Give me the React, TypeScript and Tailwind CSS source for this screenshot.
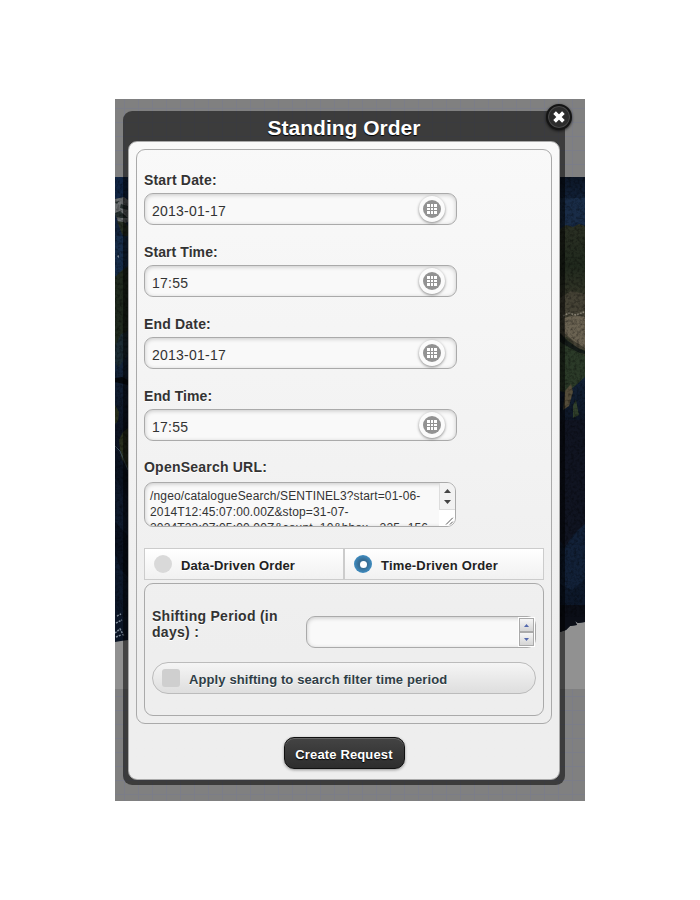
import React from "react";

const sans = "font-['Liberation_Sans',Arial,sans-serif]";

function MapBackdrop() {
  return (
    <svg className="absolute inset-0" width="470" height="702" viewBox="115 99 470 702">
      <defs>
        <pattern id="grid" x="124" y="108" width="14" height="14" patternUnits="userSpaceOnUse">
          <path d="M0 0H14V1H1V14H0Z" fill="#7b7d88" shapeRendering="crispEdges" />
        </pattern>
        <linearGradient id="sea" x1="0" y1="0" x2="0" y2="1">
          <stop offset="0" stopColor="#0c1626" />
          <stop offset=".06" stopColor="#13233c" />
          <stop offset=".4" stopColor="#14253c" />
          <stop offset=".55" stopColor="#0d1422" />
          <stop offset=".8" stopColor="#101d31" />
          <stop offset="1" stopColor="#0a1323" />
        </linearGradient>
        <linearGradient id="land" x1="0" y1="0" x2="0" y2="1">
          <stop offset="0" stopColor="#2b3024" />
          <stop offset=".25" stopColor="#20291d" />
          <stop offset=".5" stopColor="#3b3a2c" />
          <stop offset="1" stopColor="#27331f" />
        </linearGradient>
        <filter id="grain" x="0" y="0" width="1" height="1">
          <feTurbulence type="fractalNoise" baseFrequency=".35" numOctaves="3" seed="4" />
          <feColorMatrix values="0 0 0 0 0  0 0 0 0 0  0 0 0 0 0  2.2 0 0 0 -.9" />
        </filter>
      </defs>
      <rect x="115" y="99" width="470" height="702" fill="#808080" />
      <rect x="115" y="177" width="470" height="512" fill="#919191" />
      <rect x="115" y="99" width="470" height="78" fill="url(#grid)" />
      <rect x="115" y="689" width="470" height="112" fill="url(#grid)" />
      <path d="M115 177H585V622L578 623L575 621L577 625L570 626L566 630L560 632L128 640L121 641L115 642Z" fill="url(#sea)" />
      <path d="M115 177H128V198H115Z" fill="#112544" />
      <path d="M115 199L124 197L128 200V222L123 224L128 232L121 230L115 213Z" fill="#6d7173" />
      <path d="M115 202L119 201L117 204ZM121 204L128 206V210L120 208ZM115 213L120 211L128 218L121 218L116 217Z" fill="#252f2e" />
      <path d="M117 221L124 222L128 226V240L122 234Z" fill="#293125" />
      <path d="M115 236H128V275L121 272L115 280Z" fill="#172d4a" />
      <path d="M117 256L119 255L119 258Z" fill="#8492a0" />
      <path d="M115 277L120 272L128 266V330L121 339L115 346Z" fill="#1f291e" />
      <path d="M115 346L121 334L128 332V354L119 367L115 363Z" fill="#1c2c34" />
      <path d="M115 378L122 377L128 380V385L115 382Z" fill="#05090e" />
      <path d="M115 405L119 412L118 421L115 424ZM119 440L123 432L128 428V469L121 458Z" fill="#29301e" />
      <path d="M115 446L120 451L128 470" stroke="#3c4f5c" strokeWidth="1" fill="none" />
      <path d="M115 454L128 474V497L115 478Z" fill="#0b1320" />
      <path d="M115 522L128 536V577L121 570L115 553Z" fill="#0a111f" />
      <path d="M117 616L121 614M116 623L122 620M115 633L120 629L124 636M116 637L121 635" stroke="#7e8a98" strokeWidth="1.5" strokeDasharray="2 1" fill="none" />
      <path d="M560 198H585V225L576 222L568 228L560 225Z" fill="#192c47" />
      <path d="M560 229L566 225L573 227L579 224L585 226V366L576 382L567 393L560 391Z" fill="url(#land)" />
      <path d="M560 298L571 291L585 294V350L576 348L567 337L560 337Z" fill="#454235" />
      <path d="M564 318L575 315L585 317V348L574 341L564 333Z" fill="#6b6352" />
      <path d="M563 316L569 313L576 315L584 312" stroke="#8a8576" strokeWidth="1.5" strokeDasharray="2 1" fill="none" />
      <path d="M560 333L568 341L578 348L585 351V354L575 352L560 342Z" fill="#151c19" />
      <path d="M560 342L572 349L585 356V377L575 386L566 393L560 389Z" fill="#2b3a28" />
      <path d="M565 391L571 384L573 392L569 406L563 410Z" fill="#554d3a" />
      <path d="M573 405L576 400L579 415L573 418Z" fill="#31402c" />
      <path d="M560 420H585V526L573 535L565 547L560 541Z" fill="#101421" />
      <path d="M565 550L576 532L585 524V579L572 590L560 584Z" fill="#122138" />
      <path d="M560 605H585V622L578 623L575 621L577 625L570 626L566 630L560 632Z" fill="#0b0e17" />
      <rect x="115" y="177" width="470" height="440" filter="url(#grain)" opacity=".4" />
    </svg>
  );
}

function GridIcon() {
  return (
    <span className="mr-[11px] flex h-[26px] w-[26px] items-center justify-center rounded-full bg-[#fbfbfb] shadow-[0_1px_3px_rgba(0,0,0,.45)]">
      <svg width="18" height="18" viewBox="0 0 18 18">
        <circle cx="9" cy="9" r="9" fill="#929292" />
        <path
          d="M4 4h3v3H4zM8 4h2v3H8zM11 4h3v3h-3zM4 8h3v2H4zM8 8h2v2H8zM11 8h3v2h-3zM4 11h3v3H4zM8 11h2v3H8zM11 11h3v3h-3z"
          fill="#fff"
        />
      </svg>
    </span>
  );
}

function Field({ label, value, tight }: { label: string; value: string; tight?: boolean }) {
  return (
    <div className="h-[72px]">
      <div className={`h-[21px] text-[14px] font-bold leading-[16px] ${tight ? "tracking-[0.08px]" : "tracking-[0.18px]"}`}>{label}</div>
      <div className="flex h-[32px] w-[313px] items-center justify-between rounded-[9px] border border-[#aaa] bg-[#f9f9f9] pl-[7px] shadow-[inset_0_1px_4px_rgba(0,0,0,.2)]">
        <span className="pt-[3px] text-[14px] leading-[18px] tracking-[0.24px] [text-shadow:none]">{value}</span>
        <GridIcon />
      </div>
    </div>
  );
}

function SpinButton({ up }: { up?: boolean }) {
  return (
    <span className="flex h-[14px] w-[15px] items-center justify-center border border-[#aaa] bg-gradient-to-b from-[#f6f6f6] to-[#d5d5d5]">
      <svg width="5" height="3" viewBox="0 0 5 3">
        <path d={up ? "M0 3L2.5 0L5 3Z" : "M0 0H5L2.5 3Z"} fill="#5468ad" />
      </svg>
    </span>
  );
}

export default function App() {
  return (
    <main className={`flex h-[900px] w-[700px] items-center justify-center bg-white text-[#333] ${sans}`}>
      <div className="relative h-[702px] w-[470px]">
        <MapBackdrop />
        <section className="relative ml-[8px] mt-[12px] flex h-[674px] w-[442px] flex-col rounded-[9px] bg-black/53 px-[5px] pb-[5px]">
          <h1 className="h-[30px] pt-[5px] text-center text-[21px] font-bold leading-[24px] text-white [text-shadow:0_1px_1px_#000]">
            Standing Order
          </h1>
          <button aria-label="Close" className="absolute -top-[7px] left-[423px] flex h-[26px] w-[26px] items-center justify-center rounded-full border-2 border-[#141414] bg-[#2c2c2c] shadow-[0_1px_3px_rgba(0,0,0,.7),inset_0_0_0_1px_#484848]">
            <svg className="shrink-0" width="14" height="14" viewBox="0 0 14 14">
              <path d="M2.6 2.6L11.4 11.4M11.4 2.6L2.6 11.4" stroke="#fff" strokeWidth="3.7" />
            </svg>
          </button>
          <div className="flex h-[639px] w-[432px] flex-col items-center rounded-[9px] border border-[#aaa] bg-gradient-to-b from-[#f9f9f9] to-[#eee] to-[80%] pt-[7px] [text-shadow:0_1px_0_#fff]">
            <div className="h-[575px] w-[416px] shrink-0 rounded-[9px] border border-[#aaa] px-[7px] pt-[22px]">
              <Field label="Start Date:" value="2013-01-17" />
              <Field label="Start Time:" value="17:55" tight />
              <Field label="End Date:" value="2013-01-17" />
              <Field label="End Time:" value="17:55" tight />
              <div className="-mt-px h-[23px] text-[14px] font-bold leading-[16px] tracking-[0.22px]">OpenSearch URL:</div>
              <div className="flex h-[45px] w-[312px] overflow-hidden rounded-[9px] border border-[#aaa] bg-[#f9f9f9] shadow-[inset_0_1px_4px_rgba(0,0,0,.2)]">
                <p className="w-[294px] overflow-hidden whitespace-pre pl-[5px] pt-[5px] text-[12px] leading-[16px] tracking-[0.15px] [text-shadow:none]">
                  {"/ngeo/catalogueSearch/SENTINEL3?start=01-06-\n2014T12:45:07:00.00Z&stop=31-07-\n2024T23:07:05:00.00Z&count=10&bbox=-225,-156"}
                </p>
                <div className="flex w-[16px] flex-col">
                  <div className="flex h-[27px] flex-col items-center justify-between border-b border-l border-[#ddd] bg-[#f2f2f2] pb-[5px] pt-[6px]">
                    <svg width="7" height="4" viewBox="0 0 7 4"><path d="M0 4L3.5 0L7 4Z" fill="#444" /></svg>
                    <svg width="7" height="4" viewBox="0 0 7 4"><path d="M0 0H7L3.5 4Z" fill="#444" /></svg>
                  </div>
                  <svg className="bg-white" width="16" height="17" viewBox="0 0 16 17">
                    <path d="M7 15L14 8M11 15L14 12" stroke="#555" fill="none" />
                  </svg>
                </div>
              </div>
              <div className="mt-[21px] flex h-[32px] border border-[#ccc] bg-gradient-to-b from-white to-[#f1f1f1] text-[13px] font-bold text-[#222]">
                <label className="flex w-[200px] items-center border-r-2 border-[#ccc] pl-[9px]">
                  <span className="h-[18px] w-[18px] rounded-full bg-[#d9d9d9]" />
                  <span className="ml-[9px] pt-[3px] tracking-[0.12px]">Data-Driven Order</span>
                </label>
                <label className="flex items-center pl-[9px]">
                  <span className="flex h-[18px] w-[18px] items-center justify-center rounded-full bg-[radial-gradient(circle,#386d94_35%,#3f8cc0_70%)]">
                    <span className="h-[7px] w-[7px] rounded-full bg-white" />
                  </span>
                  <span className="ml-[9px] pt-[3px] tracking-[0.18px]">Time-Driven Order</span>
                </label>
              </div>
              <div className="mt-[3px] h-[133px] rounded-[9px] border border-[#aaa] px-[7px] pt-[24px]">
                <div className="flex h-[54px] justify-between">
                  <div className="whitespace-nowrap text-[14px] font-bold leading-[16px] tracking-[0.28px]">Shifting Period (in<br />days) :</div>
                  <div className="mt-[8px] flex h-[32px] w-[230px] items-start justify-end rounded-[9px] border border-[#aaa] bg-[#f9f9f9] shadow-[inset_0_1px_4px_rgba(0,0,0,.2)]">
                    <div className="flex flex-col border border-white bg-white">
                      <SpinButton up />
                      <SpinButton />
                    </div>
                  </div>
                </div>
                <label className="flex h-[32px] items-center rounded-[16px] border border-[#bbb] bg-gradient-to-b from-[#f5f5f5] to-[#dedede] pl-[9px] text-[13px] font-bold text-[#2f3e46]">
                  <span className="h-[18px] w-[18px] rounded-[3px] bg-[#cfcfcf]" />
                  <span className="ml-[9px] pt-[3px] tracking-[0.11px]">Apply shifting to search filter time period</span>
                </label>
              </div>
            </div>
            <button className="mt-[13px] h-[32px] w-[121px] rounded-[10px] border border-[#111] bg-gradient-to-b from-[#444] to-[#2d2d2d] pt-[3px] text-[13px] font-bold tracking-[0.14px] text-white shadow-[0_1px_3px_rgba(0,0,0,.4),inset_0_1px_0_#666] [text-shadow:0_1px_1px_#000]">
              Create Request
            </button>
          </div>
        </section>
      </div>
    </main>
  );
}
